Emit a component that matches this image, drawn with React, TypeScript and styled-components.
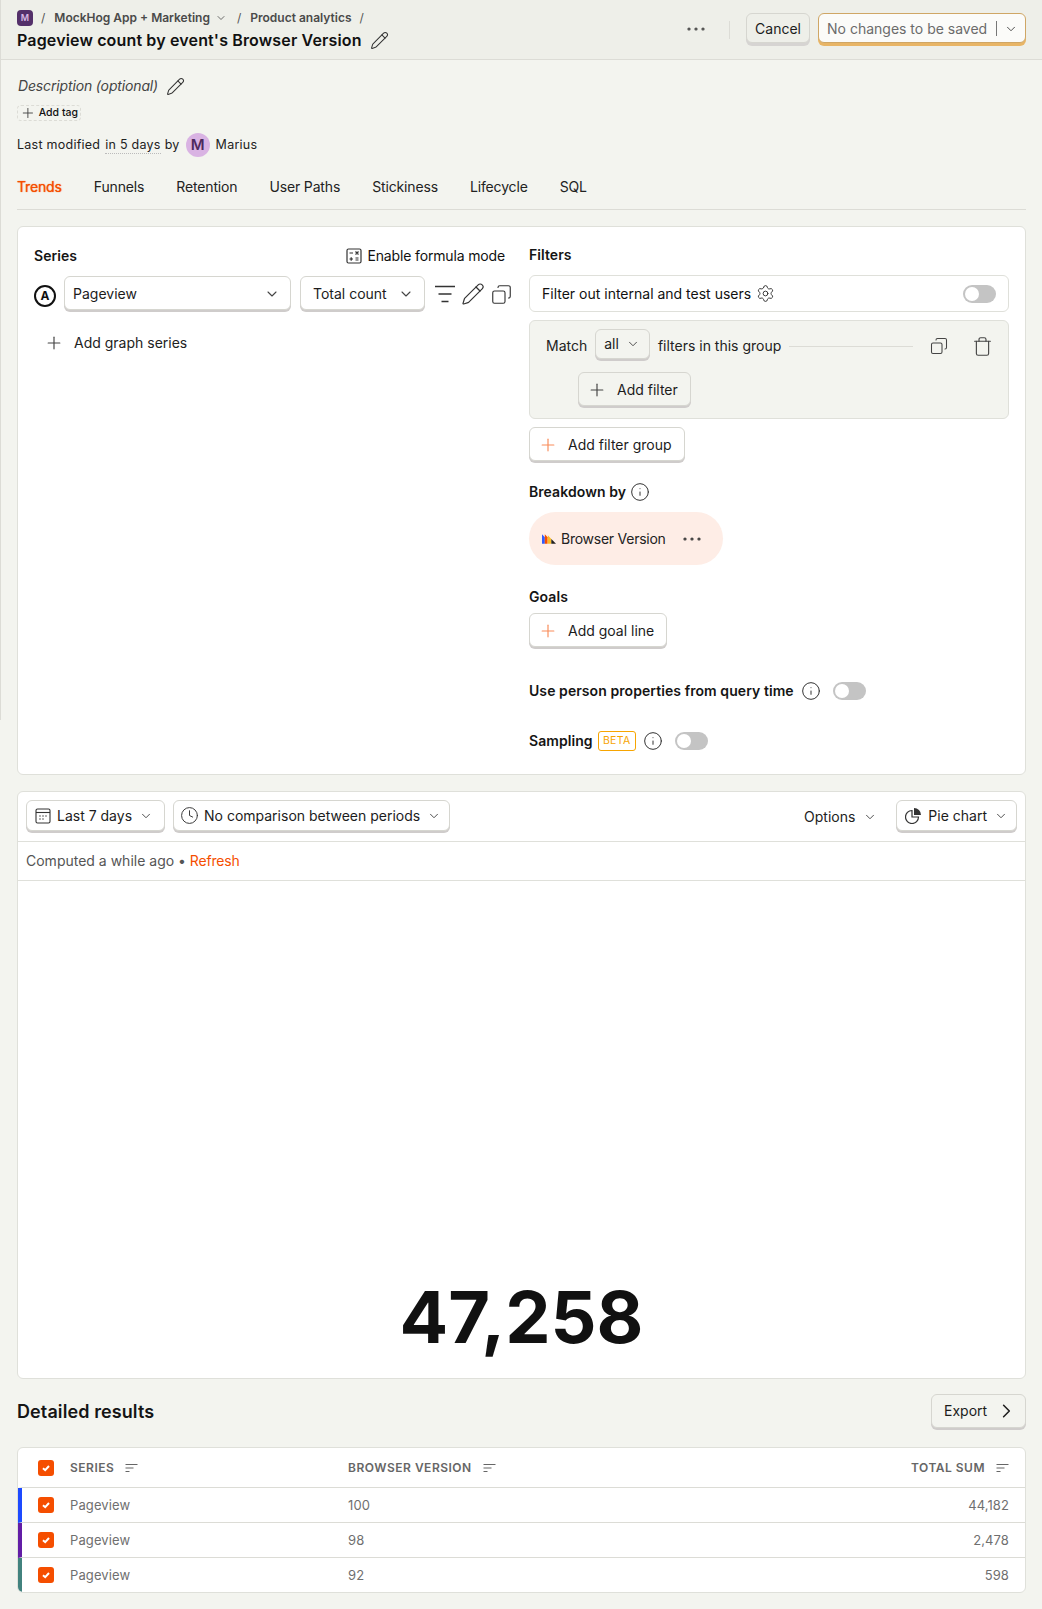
import React from 'react';
import styled, { createGlobalStyle } from 'styled-components';
import { ChevronDown, ChevronRight, Clock, Copy, Ellipsis, Info, Pencil, Plus, Settings, Trash } from 'lucide-react';

const GlobalStyle = createGlobalStyle`
  html, body {
    margin: 0;
    padding: 0;
    background: #f3f4ef;
    color: #111;
    font-family: Inter, "Noto Sans", sans-serif;
    font-size: 14px;
    line-height: 20px;
  }
  * { box-sizing: border-box; }
`;

const Page = styled.div`
  position: relative;
  width: 1042px;
  height: 1609px;
  overflow: hidden;

  &::before {
    content: '';
    position: absolute;
    left: 0;
    top: 0;
    width: 1px;
    height: 720px;
    background: #dcdcd6;
  }
`;

const Header = styled.header`
  height: 60px;
  padding: 10px 16px 0 17px;
  display: flex;
  justify-content: space-between;
  background: #eeefe9;
  border-bottom: 1px solid #dcdcd6;
`;

const TitleBlock = styled.div`
  display: flex;
  flex-direction: column;
`;

const Crumbs = styled.div`
  display: flex;
  align-items: center;
  height: 16px;
  font-size: 12px;
  font-weight: 600;
  color: #4a4a4a;
`;

const ProjectLogo = styled.span`
  width: 16px;
  height: 16px;
  border-radius: 4px;
  background: #54306a;
  color: #d9b9e4;
  font-size: 9px;
  font-weight: 600;
  display: flex;
  align-items: center;
  justify-content: center;
`;

const Slash = styled.span`
  margin: 0 9px 0 8px;
  color: #555;
  font-weight: 400;
`;

const CrumbChevron = styled(ChevronDown)`
  margin: 0 2px 0 5px;
`;

const Title = styled.h1`
  margin: 3px 0 0;
  display: flex;
  align-items: center;
  gap: 8px;
  font-size: 16px;
  line-height: 22px;
  font-weight: 600;
  color: #111;
  letter-spacing: 0.15px;
`;

const HeaderActions = styled.div`
  display: flex;
  align-items: flex-start;
  padding-top: 3px;
`;

const MoreDots = styled.span`
  display: flex;
  align-items: center;
  height: 32px;
  color: #444;
  margin-right: 21px;
`;

const HeaderDivider = styled.span`
  width: 1px;
  height: 18px;
  margin: 8px 16px 0 0;
  background: #dcdcd6;
`;

const Button = styled.button<{ $bg?: string; $width?: number }>`
  display: inline-flex;
  align-items: center;
  gap: 10px;
  width: ${({ $width }) => ($width ? `${$width}px` : 'auto')};
  height: 34px;
  padding: 2px 12px 0 8px;
  background: ${({ $bg }) => $bg ?? '#fff'};
  border: 1px solid #d6d6d0;
  border-radius: 6px;
  box-shadow: 0 2px 0 0 #cfcccb;
  font: inherit;
  color: #1c1c1c;
  white-space: nowrap;
`;

const CancelButton = styled(Button)`
  padding: 1px 8px 0;
  margin-right: 8px;
  height: 30px;
  box-shadow: 0 3px 0 0 #d6d4d2;
`;

const SaveButton = styled(Button)`
  width: 208px;
  height: 30px;
  padding: 1px 6px 0 8px;
  border-color: #cfa665;
  background: #fbfbf9;
  box-shadow: 0 3px 0 0 #e8b566;
  color: #6b6b6b;
  gap: 0;
`;

const SaveSplit = styled.span`
  width: 1px;
  height: 15px;
  margin: 0 6px 0 auto;
  background: #777;
`;

const Main = styled.main`
  padding: 16px 16px 0 17px;
`;

const Description = styled.div`
  display: flex;
  align-items: center;
  gap: 8px;
  font-style: italic;
  font-size: 14px;
  color: #444;
  padding-left: 1px;
  letter-spacing: -0.15px;
`;

const TagButton = styled.div`
  margin-top: 9px;
  display: flex;
  width: 64px;
  align-items: center;
  gap: 3px;
  height: 16px;
  padding: 0 2px;
  border: 1px dashed #dcdcd6;
  border-radius: 4px;
  font-size: 10.5px;
  font-weight: 500;
  line-height: 14px;
  white-space: nowrap;
`;

const Modified = styled.div`
  margin-top: 12px;
  display: flex;
  align-items: center;
  height: 24px;
  font-size: 12.5px;
  letter-spacing: 0.25px;
  color: #222;
`;

const RelativeTime = styled.span`
  margin: 0 4px 0 5px;
  border-bottom: 1px dotted #bbb;
  line-height: 16px;
`;

const Avatar = styled.span`
  width: 24px;
  height: 24px;
  margin: 0 6px;
  border-radius: 50%;
  background: #d9b3e3;
  color: #4d2a5e;
  font-size: 15px;
  font-weight: 600;
  display: flex;
  align-items: center;
  justify-content: center;
  letter-spacing: 0;
`;

const Tabs = styled.nav`
  margin-top: 20px;
  padding-bottom: 12px;
  display: flex;
  gap: 32px;
  border-bottom: 1px solid #dcdcd6;
  letter-spacing: -0.15px;
`;

const Tab = styled.span<{ $active?: boolean }>`
  color: ${({ $active }) => ($active ? '#f54e00' : '#222')};
  text-shadow: ${({ $active }) => ($active ? '0 0 1px #f54e00' : 'none')};
`;

const Card = styled.section`
  background: #fff;
  border: 1px solid #dfe0da;
  border-radius: 6px;
`;

const QueryCard = styled(Card)`
  margin-top: 16px;
  height: 549px;
  padding: 18px 16px 0;
  display: grid;
  grid-template-columns: 479px 1fr;
  column-gap: 16px;
`;

const Column = styled.div`
  display: flex;
  flex-direction: column;
  align-items: flex-start;
`;

const SeriesHeader = styled.div`
  width: 100%;
  height: 20px;
  margin-top: 1px;
  display: flex;
  justify-content: space-between;
  align-items: center;
  padding-right: 8px;
`;

const Label = styled.div<{ $top?: number }>`
  margin-top: ${({ $top }) => $top ?? 0}px;
  display: flex;
  align-items: center;
  gap: 4px;
  height: 20px;
  font-weight: 600;
  color: #151515;
  letter-spacing: 0.07px;
  white-space: nowrap;
`;

const FormulaToggle = styled.span`
  display: flex;
  align-items: center;
  gap: 5px;
  letter-spacing: -0.15px;
`;

const SeriesRow = styled.div`
  margin-top: 10px;
  display: flex;
  align-items: center;
`;

const SeriesBadge = styled.span`
  width: 22px;
  height: 22px;
  margin: 6px 8px 0 0;
  border: 2px solid #111;
  border-radius: 50%;
  display: flex;
  align-items: center;
  justify-content: center;
  font-size: 12px;
  font-weight: 700;
`;

const Select = styled(Button)`
  justify-content: space-between;
  padding: 2px 9px 0 8px;
`;

const CountSelect = styled(Select)`
  margin-left: 9px;
  padding: 2px 9px 0 12px;
`;

const SeriesIcons = styled.span`
  display: flex;
  align-items: center;
  gap: 6px;
  margin: 2px 0 0 10px;
  color: #333;
`;

// the front square of the reference's copy icon sits bottom left
const CopyIcon = styled(Copy)`
  transform: scaleX(-1);
`;

const GhostAdd = styled.div`
  margin: 17px 0 0 10px;
  height: 32px;
  display: flex;
  align-items: center;
  gap: 10px;
  color: #222;
`;

const FilterBox = styled.div`
  margin-top: 10px;
  width: 100%;
  height: 37px;
  padding: 0 12px;
  display: flex;
  align-items: center;
  gap: 5px;
  border: 1px solid #dfe0da;
  border-radius: 6px;
`;

const Toggle = styled.span<{ $push?: boolean }>`
  width: 33px;
  height: 18px;
  padding: 2px;
  margin-left: ${({ $push }) => ($push ? 'auto' : '0')};
  border-radius: 9px;
  background: #c4c4c4;
  display: inline-flex;
  flex: none;
`;

const Knob = styled.span`
  width: 14px;
  height: 14px;
  border-radius: 50%;
  background: #fff;
`;

const GroupBox = styled.div`
  margin-top: 8px;
  width: 100%;
  padding: 8px 12px 12px 16px;
  background: #f3f4ef;
  border: 1px solid #dfe0da;
  border-radius: 6px;
`;

const GroupRow = styled.div`
  height: 34px;
  display: flex;
  align-items: center;
  color: #222;
`;

const AllSelect = styled(Button)`
  align-self: flex-start;
  height: 30px;
  padding: 0 8px;
  margin: 0 8px;
  gap: 6px;
  background: #f3f4ef;
`;

const GroupLine = styled.span`
  flex: 1;
  height: 1px;
  margin: 0 17px 0 8px;
  background: #dcdcd6;
`;

const GroupIcons = styled.span`
  display: flex;
  align-items: center;
  gap: 24px;
  margin-right: 3px;
  color: #444;
`;

const AddFilterButton = styled(Button)`
  margin: 9px 0 0 32px;
`;

const AddOutlineButton = styled(Button)<{ $top: number }>`
  margin-top: ${({ $top }) => $top}px;
`;

const BreakdownPill = styled.div`
  margin-top: 10px;
  height: 53px;
  padding: 0 19px 0 13px;
  display: flex;
  align-items: center;
  border-radius: 27px;
  background: #feede6;
  color: #222;
  letter-spacing: -0.25px;
`;

const PillDots = styled(Ellipsis)`
  margin-left: 14px;
`;

const OptionRow = styled(Label)`
  gap: 0;
`;

const OptionInfo = styled(Info)`
  margin: 0 12px 0 7px;
`;

const BetaTag = styled.span`
  margin-left: 5px;
  height: 20px;
  width: 38px;
  border: 1px solid #f7a501;
  border-radius: 3px;
  color: #f7a501;
  font-size: 10.5px;
  font-weight: 400;
  letter-spacing: 0.3px;
  display: flex;
  align-items: center;
  justify-content: center;
`;

const ChartCard = styled(Card)`
  margin-top: 16px;
`;

const Toolbar = styled.div`
  height: 50px;
  padding: 8px 8px 0;
  display: flex;
  align-items: flex-start;
  gap: 8px;
  border-bottom: 1px solid #dfe0da;
`;

const ToolSelect = styled(Button)`
  height: 31px;
  padding: 0 7px 0 8px;
  gap: 6px;
`;

const ComparisonClock = styled(Clock)`
  margin: 0 -1px 0 -2px;
`;

const OptionsButton = styled.span`
  margin-left: auto;
  margin-right: 10px;
  height: 33px;
  display: flex;
  align-items: center;
  gap: 7px;
  color: #222;
`;

const ComputedRow = styled.div`
  height: 39px;
  padding: 0 8px;
  display: flex;
  align-items: center;
  color: #555;
  border-bottom: 1px solid #dfe0da;
  white-space: pre;
`;

const Refresh = styled.span`
  color: #f54e00;
  letter-spacing: -0.2px;
`;

const ChartArea = styled.div`
  height: 497px;
  padding-bottom: 18px;
  display: flex;
  align-items: flex-end;
  justify-content: center;
`;

const BigNumber = styled.div`
  font-size: 72px;
  line-height: 86px;
  font-weight: 700;
  color: #111;
`;

const ResultsHeader = styled.div`
  margin-top: 15px;
  height: 36px;
  display: flex;
  align-items: flex-start;
  justify-content: space-between;
`;

const ResultsTitle = styled.h2`
  margin: 0;
  align-self: center;
  font-size: 18px;
  font-weight: 600;
  color: #151515;
  letter-spacing: 0.1px;
`;

const ExportButton = styled(Button)`
  width: 95px;
  padding: 0 7px 0 12px;
  gap: 8px;
  background: #f3f4ef;
`;

const ResultsTable = styled(Card)`
  margin-top: 17px;
  overflow: hidden;
`;

const Row = styled.div<{ $stripe?: string; $head?: boolean }>`
  height: ${({ $head }) => ($head ? 40 : 35)}px;
  display: grid;
  grid-template-columns: 48px 278px 1fr auto;
  align-items: center;
  padding-right: 16px;
  border-left: 4px solid ${({ $stripe }) => $stripe ?? 'transparent'};
  border-bottom: 1px solid #dcdcd6;
  font-size: ${({ $head }) => ($head ? 12 : 13)}px;
  font-weight: ${({ $head }) => ($head ? 600 : 400)};
  letter-spacing: ${({ $head }) => ($head ? 0.5 : 0.1)}px;
  color: ${({ $head }) => ($head ? '#666' : '#6f6f6f')};

  &:last-child {
    height: 34px;
    border-bottom: none;
  }
`;

const CheckCell = styled.span`
  padding-left: 16px;
  display: flex;
`;

const CheckBox = styled.span`
  width: 16px;
  height: 16px;
  border-radius: 3px;
  background: #f54e00;
  display: flex;
  align-items: center;
  justify-content: center;
`;

const HeadCell = styled.span`
  display: flex;
  align-items: center;
  gap: 11px;
`;

const Check = () => (
  <CheckBox>
    <svg width="10" height="10" viewBox="0 0 10 10" fill="none" stroke="#fff" strokeWidth="2">
      <path d="M2 5.2 4.2 7.2 8 3" />
    </svg>
  </CheckBox>
);

const SortIcon = () => (
  <svg width="13" height="10" viewBox="0 0 13 10" fill="none" stroke="#666" strokeWidth="1.2">
    <path d="M0.5 1.5h12M0.5 5h8M0.5 8.5h4" />
  </svg>
);

const FormulaIcon = () => (
  <svg width="16" height="16" viewBox="0 0 16 16" fill="none" stroke="#333" strokeWidth="1.2">
    <rect x="1" y="1" width="14" height="14" rx="1.5" />
    <path d="M3.5 5h3.5M9.5 3.5l3 3M12.5 3.5l-3 3M5.2 9.2v3.5M3.5 11h3.5M9.5 10h3M9.5 12h3" />
  </svg>
);

const SeriesFilterIcon = () => (
  <svg width="20" height="18" viewBox="0 0 20 18" fill="none" stroke="#333" strokeWidth="1.5">
    <path d="M0 1.5h20M3.5 9h13M6.5 16.5h7" />
  </svg>
);

const CalendarIcon = () => (
  <svg width="16" height="16" viewBox="0 0 16 16" fill="none" stroke="#333" strokeWidth="1.1">
    <rect x="1" y="1" width="14" height="14" rx="1.5" />
    <path d="M1 4.5h14" />
    <path d="M4.5 8h1M7.5 8h1M10.5 8h1M4.5 11h1M7.5 11h1" strokeWidth="1.4" />
  </svg>
);

const PieIcon = () => (
  <svg width="17" height="17" viewBox="0 0 17 17">
    <path d="M7 3.5a6.5 6.5 0 1 0 6.5 6.5H7z" fill="none" stroke="#333" strokeWidth="1.2" />
    <path d="M9 1a7 7 0 0 1 7 7H9z" fill="#333" />
  </svg>
);

const LogoSvg = styled.svg`
  margin-right: 5px;
`;

const PropertyLogo = () => (
  <LogoSvg width="14" height="10" viewBox="0 0 15 10">
    <path d="M0 0l3 3v7H0z" fill="#2f5bff" />
    <path d="M3 0l3 3v7H3z" fill="#f54e00" />
    <path d="M6.2 1 10 5v5H6.2z" fill="#f9bd2b" />
    <path d="M10 5l5 5h-5z" fill="#222" />
  </LogoSvg>
);

const ChevronSvg = styled(ChevronDown)`
  margin: 0 1px;
  flex: none;
`;

const Chevron = ({ size = 14 }: { size?: number }) => <ChevronSvg size={size} strokeWidth={1.6} color="#444" />;
const AddIcon = ({ color = '#444' }: { color?: string }) => <Plus size={20} strokeWidth={1.4} color={color} />;
const InfoIcon = () => <Info size={20} strokeWidth={1.2} color="#333" />;

const rows = [
  { version: '100', total: '44,182', stripe: '#1d4aff' },
  { version: '98', total: '2,478', stripe: '#621da6' },
  { version: '92', total: '598', stripe: '#42827e' },
];

export default function App() {
  return (
    <Page>
      <GlobalStyle />
      <Header>
        <TitleBlock>
          <Crumbs>
            <ProjectLogo>M</ProjectLogo>
            <Slash>/</Slash>
            MockHog App + Marketing
            <CrumbChevron size={12} strokeWidth={1.6} />
            <Slash>/</Slash>
            Product analytics
            <Slash>/</Slash>
          </Crumbs>
          <Title>
            Pageview count by event's Browser Version
            <Pencil size={19} strokeWidth={1.3} color="#333" />
          </Title>
        </TitleBlock>
        <HeaderActions>
          <MoreDots><Ellipsis size={24} strokeWidth={1.2} /></MoreDots>
          <HeaderDivider />
          <CancelButton $bg="#eeefe9">Cancel</CancelButton>
          <SaveButton>
            No changes to be saved
            <SaveSplit />
            <Chevron />
          </SaveButton>
        </HeaderActions>
      </Header>

      <Main>
        <Description>
          Description (optional)
          <Pencil size={19} strokeWidth={1.3} color="#333" />
        </Description>
        <TagButton><Plus size={16} strokeWidth={1.4} color="#444" />Add tag</TagButton>
        <Modified>
          Last modified<RelativeTime>in 5 days</RelativeTime>by
          <Avatar>M</Avatar>
          Marius
        </Modified>

        <Tabs>
          <Tab $active>Trends</Tab>
          <Tab>Funnels</Tab>
          <Tab>Retention</Tab>
          <Tab>User Paths</Tab>
          <Tab>Stickiness</Tab>
          <Tab>Lifecycle</Tab>
          <Tab>SQL</Tab>
        </Tabs>

        <QueryCard>
          <Column>
            <SeriesHeader>
              <Label>Series</Label>
              <FormulaToggle><FormulaIcon />Enable formula mode</FormulaToggle>
            </SeriesHeader>
            <SeriesRow>
              <SeriesBadge>A</SeriesBadge>
              <Select $width={227}>Pageview<Chevron size={16} /></Select>
              <CountSelect $width={125}>Total count<Chevron size={16} /></CountSelect>
              <SeriesIcons>
                <SeriesFilterIcon />
                <Pencil size={24} strokeWidth={1.2} />
                <CopyIcon size={21} strokeWidth={1.3} />
              </SeriesIcons>
            </SeriesRow>
            <GhostAdd>
              <AddIcon />
              Add graph series
            </GhostAdd>
          </Column>

          <Column>
            <Label>Filters</Label>
            <FilterBox>
              Filter out internal and test users
              <Settings size={19} strokeWidth={1.2} color="#333" />
              <Toggle $push><Knob /></Toggle>
            </FilterBox>
            <GroupBox>
              <GroupRow>
                Match
                <AllSelect>all<Chevron /></AllSelect>
                filters in this group
                <GroupLine />
                <GroupIcons>
                  <CopyIcon size={18} strokeWidth={1.4} />
                  <Trash size={21} strokeWidth={1.3} />
                </GroupIcons>
              </GroupRow>
              <AddFilterButton $bg="#f3f4ef">
                <AddIcon />
                Add filter
              </AddFilterButton>
            </GroupBox>
            <AddOutlineButton $top={8}>
              <AddIcon color="#f98c5a" />
              Add filter group
            </AddOutlineButton>

            <Label $top={21}>Breakdown by <InfoIcon /></Label>
            <BreakdownPill>
              <PropertyLogo />
              Browser Version
              <PillDots size={24} strokeWidth={1.2} color="#333" />
            </BreakdownPill>

            <Label $top={22}>Goals</Label>
            <AddOutlineButton $top={6}>
              <AddIcon color="#f98c5a" />
              Add goal line
            </AddOutlineButton>

            <OptionRow $top={34}>
              Use person properties from query time
              <OptionInfo size={20} strokeWidth={1.2} color="#333" />
              <Toggle><Knob /></Toggle>
            </OptionRow>
            <OptionRow $top={30}>
              Sampling
              <BetaTag>BETA</BetaTag>
              <OptionInfo size={20} strokeWidth={1.2} color="#333" />
              <Toggle><Knob /></Toggle>
            </OptionRow>
          </Column>
        </QueryCard>

        <ChartCard>
          <Toolbar>
            <ToolSelect $width={139}><CalendarIcon />Last 7 days<Chevron /></ToolSelect>
            <ToolSelect><ComparisonClock size={19} strokeWidth={1.2} color="#333" />No comparison between periods<Chevron /></ToolSelect>
            <OptionsButton>Options<Chevron /></OptionsButton>
            <ToolSelect><PieIcon />Pie chart<Chevron /></ToolSelect>
          </Toolbar>
          <ComputedRow>Computed a while ago • <Refresh>Refresh</Refresh></ComputedRow>
          <ChartArea><BigNumber>47,258</BigNumber></ChartArea>
        </ChartCard>

        <ResultsHeader>
          <ResultsTitle>Detailed results</ResultsTitle>
          <ExportButton $bg="#f3f4ef">Export<ChevronRight size={24} strokeWidth={1.6} /></ExportButton>
        </ResultsHeader>

        <ResultsTable>
          <Row $head>
            <CheckCell><Check /></CheckCell>
            <HeadCell>SERIES <SortIcon /></HeadCell>
            <HeadCell>BROWSER VERSION <SortIcon /></HeadCell>
            <HeadCell>TOTAL SUM <SortIcon /></HeadCell>
          </Row>
          {rows.map(row => (
            <Row key={row.version} $stripe={row.stripe}>
              <CheckCell><Check /></CheckCell>
              <span>Pageview</span>
              <span>{row.version}</span>
              <span>{row.total}</span>
            </Row>
          ))}
        </ResultsTable>
      </Main>
    </Page>
  );
}
